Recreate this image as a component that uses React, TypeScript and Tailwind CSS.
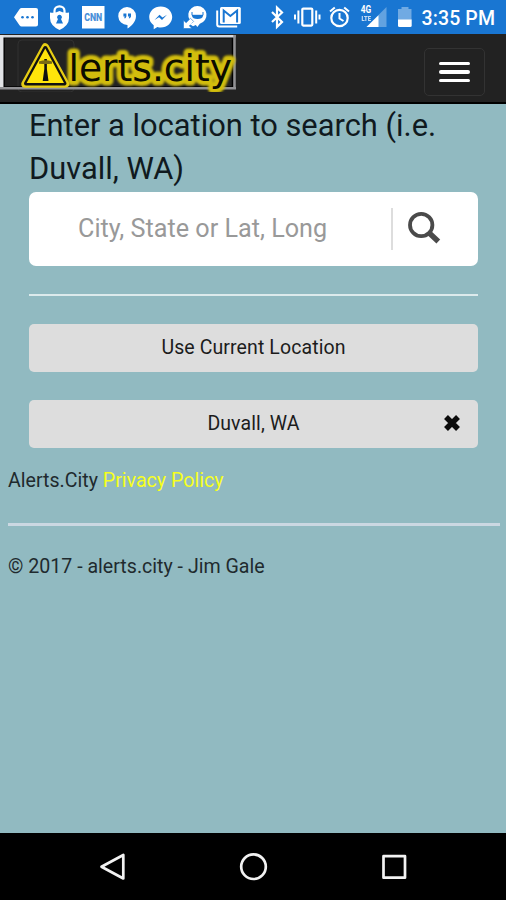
import type { ReactNode } from 'react';

function StatusBar() {
  return (
    <div className="h-[34px] bg-[#1976d2] text-white">
      <svg width="506" height="34" viewBox="0 0 506 34" fill="currentColor" fontFamily="Roboto, sans-serif">
        {/* message tag */}
        <path d="M21.5 8H36a2 2 0 0 1 2 2v14.500a2 2 0 0 1-2 2H21.500q-1 0-2-1.200L14 17.200l5.500-8q1-1.200 2-1.200Z" />
        <g fill="#1976d2">
          <circle cx="22.500" cy="17.200" r="1.300" />
          <circle cx="27.500" cy="17.200" r="1.300" />
          <circle cx="32.500" cy="17.200" r="1.300" />
        </g>
        {/* vpn shield */}
        <path d="M54.500 14V10.800a5 4.500 0 0 1 10 0V14" fill="none" stroke="currentColor" strokeWidth="2.200" />
        <path d="M50 12.500q5.500 1 9.500-1.500q4 2.500 9.500 1.500v5.500q0 7.500-9.500 12q-9.500-4.500-9.500-12Z" />
        <path d="M59.500 14.800a2.400 2.400 0 0 1 1.500 4.300l2 4.400h-7l2-4.400a2.400 2.400 0 0 1 1.500-4.300Z" fill="#1976d2" />
        {/* cnn */}
        <rect x="82" y="6" width="22.500" height="22.500" />
        <text x="84.200" y="20.800" fontSize="10" fontWeight="900" fill="#4a90d9" textLength="18" lengthAdjust="spacingAndGlyphs">CNN</text>
        {/* hangouts */}
        <path d="M127 7a9 9 0 0 1 9 9c0 6-5 10.500-8.500 12.500V25a9 9 0 1 1-.5-18Z" />
        <path d="M123.400 13.500h3v3l-1 1.700h-1.300l.7-1.700h-1.400ZM128 13.500h3v3l-1 1.700h-1.300l.7-1.700h-1.400Z" fill="#1976d2" />
        {/* messenger */}
        <path d="M160.700 6.500c6.500 0 11.500 4.700 11.500 10.500s-5 10.500-11.500 10.500q-1.700 0-3.300-.5l-3.700 2.300v-4c-2.700-2-4.500-5-4.500-8.300 0-5.800 5-10.500 11.500-10.500Z" />
        <path d="m154.500 20 5-5.200 3 2.600 4.500-2.600-5 5.200-3-2.700Z" fill="#1976d2" />
        {/* call bubble */}
        <path d="M197.500 6a9 9 0 0 1 2.300 17.700l-2.500 3.200-2.300-3.200A9 9 0 0 1 197.500 6Z" />
        <path d="M192 12v3.300h11V12" fill="none" stroke="#1976d2" strokeWidth="1" />
        <path d="M192 15h11v.8q-.5 3.200-5.500 3.200t-5.500-3.200Z" fill="#1976d2" />
        <path d="M183.500 28.500v-8.300l2.600 2.500 4.400-4.400 3.200 3.200-4.400 4.400 2.700 2.600Z" stroke="#1976d2" strokeWidth=".6" />
        <path d="m195 21.300 2.500 3-4.500 2-3-2Z" />
        {/* gmail stack */}
        <path d="M217.200 10.500v14a2 2 0 0 0 2 2h18" fill="none" stroke="currentColor" strokeWidth="2" />
        <rect x="220" y="7" width="20.800" height="17" rx="1.500" />
        <path d="M223.700 22.500v-12l6.700 5.500 6.700-5.500v12" fill="none" stroke="#1976d2" strokeWidth="2" />
        {/* bluetooth */}
        <path d="m272 12 10 10-5 4.800V7.700l5 4.800-10 9.500" fill="none" stroke="currentColor" strokeWidth="2.200" />
        {/* vibrate */}
        <rect x="302.300" y="8.600" width="10" height="17" rx="1" fill="none" stroke="currentColor" strokeWidth="2.200" />
        <path d="M298.400 10.500v13M316.200 10.500v13M295 14.500v5M319.500 14.500v5" stroke="currentColor" strokeWidth="2" />
        {/* alarm */}
        <circle cx="339.500" cy="18" r="8.200" fill="none" stroke="currentColor" strokeWidth="2.200" />
        <path d="M339.500 13v5.500l4 2.500M330 11.500l4.800-4M349 11.500l-4.800-4" fill="none" stroke="currentColor" strokeWidth="2" />
        {/* signal */}
        <path d="M386.500 7v20H366.500Z" opacity=".32" />
        <path d="M378.500 15.200V27h-12Z" />
        <text x="360.800" y="13" fontSize="10" fontWeight="700" textLength="10.500" lengthAdjust="spacingAndGlyphs">4G</text>
        <text x="361.500" y="21" fontSize="8" fontWeight="900" opacity=".75" textLength="9.500" lengthAdjust="spacingAndGlyphs">LTE</text>
        {/* battery */}
        <path d="M401.500 7h7v2h3v11h-13.500V9h3.500Z" opacity=".38" />
        <path d="M398 19.500h13.700V25.500q0 1.500-1.500 1.500h-10.700q-1.500 0-1.500-1.500Z" />
        <text x="421.500" y="25.200" fontSize="19.500" fontWeight="500" textLength="73.500">3:35 PM</text>
      </svg>
    </div>
  );
}

function Logo() {
  return (
    <svg width="240" height="58" viewBox="0 34 240 58">
      <defs>
        <filter id="glow" x="-10%" y="-30%" width="120%" height="160%">
          <feGaussianBlur stdDeviation="1.3" />
        </filter>
      </defs>
      <rect x="18" y="40" width="56" height="52" rx="4" fill="none" stroke="#303030" />
      <rect x="4" y="37.500" width="228.500" height="49.500" fill="none" stroke="#000" strokeWidth="1.500" />
      <path d="M0 36.200H235.500" stroke="#d4d7dc" strokeWidth="2.500" />
      <path d="M1.700 35V89" stroke="#e2e3e6" strokeWidth="3.500" />
      <path d="M234.500 35V89.500M0 88.200H236" stroke="#929295" strokeWidth="2.500" />
      <g fontFamily="'DejaVu Sans', sans-serif" fontSize="37.500">
        <text x="68.500" y="80.500" textLength="163.500" lengthAdjust="spacingAndGlyphs" fill="#d2bd08" stroke="#d2bd08" strokeWidth="9" strokeLinejoin="round" filter="url(#glow)">lerts.city</text>
        <text x="68.500" y="80.500" textLength="163.500" lengthAdjust="spacingAndGlyphs" fill="#0c0c00">lerts.city</text>
      </g>
      <path d="M45.300 47 65.500 84H25Z" fill="#e6cd14" stroke="#e6cd14" strokeWidth="7.500" strokeLinejoin="round" />
      <path d="M45.300 48 64.500 83.500H26Z" fill="#ffe50a" stroke="#111" strokeWidth="4" strokeLinejoin="round" />
      <path d="M45.300 48.500 64 83H26.600Z" fill="#ffe50a" />
      <path d="M44.300 59h2.600v10l1.600 12h-5.800l1.600-12Z" fill="#111" />
      <path d="M39 61.500q6.500-2.500 13 0v2.200q-6.500.5-13 0Z" fill="#7c6c12" />
    </svg>
  );
}

function NavBar() {
  return (
    <header className="flex h-[70px] items-start justify-between border-b-2 border-black bg-[#222] pr-[21px]">
      <Logo />
      <button className="mt-3.5 flex h-[48px] w-[61px] flex-col items-center justify-center gap-[5px] rounded-[5px] border border-[#333]">
        <span className="h-[3.5px] w-[31px] rounded-full bg-white" />
        <span className="h-[3.5px] w-[31px] rounded-full bg-white" />
        <span className="h-[3.5px] w-[31px] rounded-full bg-white" />
      </button>
    </header>
  );
}

function LocationButton({ children }: { children: ReactNode }) {
  return (
    <button className="relative flex h-[48px] w-full items-center justify-center rounded-[5px] bg-[#ddd] pb-px text-[19.5px] tracking-[0.1px] text-[#1c1c1c]">
      {children}
    </button>
  );
}

export default function App() {
  return (
    <div className="flex h-[900px] w-[506px] flex-col overflow-hidden bg-[#91bac1] font-['Roboto',sans-serif] text-[#1f2a2e]">
      <StatusBar />
      <NavBar />
      <main className="pr-[28px] pl-[29px]">
        <h1 className="-mr-4 h-[88px] text-[30.85px] leading-[43px] font-normal text-[#101a1f]">
          Enter a location to search (i.e.
          <br />
          Duvall, WA)
        </h1>
        <div className="flex h-[74px] items-center rounded-[7px] bg-white pl-[49px]">
          <span className="w-[313px] text-[25.2px] text-[#999]">City, State or Lat, Long</span>
          <span className="h-[42px] w-[2px] bg-[#ddd]" />
          <svg className="ml-3.5" width="36" height="36" viewBox="0 0 36 36" fill="none" stroke="#4a4a4a">
            <circle cx="14.200" cy="14" r="11.200" strokeWidth="3.800" />
            <path d="m22 21.800 9.300 8.800" strokeWidth="5.500" />
          </svg>
        </div>
        <hr className="mt-7 mb-7 border-t-2 border-[#dceaec]" />
        <LocationButton>Use Current Location</LocationButton>
        <div className="h-7" />
        <LocationButton>
          Duvall, WA
          <svg className="absolute top-3.5 right-[17px]" width="18" height="18" viewBox="0 0 18 18" stroke="#0b0b0b" strokeWidth="5.500">
            <path d="m3 3 12 12M15 3 3 15" />
          </svg>
        </LocationButton>
      </main>
      <footer className="flex-1 px-2 text-[19.6px]">
        <p className="mt-[19px] leading-7">
          Alerts.City <a className="text-[#f6ff1e]">Privacy Policy</a>
        </p>
        <hr className="mt-[28px] -mr-0.5 border-t-[3px] border-[#cbd8e2]" />
        <p className="mt-[27px] leading-7">© 2017 - alerts.city - Jim Gale</p>
      </footer>
      <nav className="h-[67px] bg-black">
        <svg width="506" height="67" viewBox="0 833 506 67" fill="none" stroke="#f2f2f2" strokeWidth="2.700" strokeLinejoin="round">
          <path d="M123.300 855v23.500L101.500 866.700Z" />
          <circle cx="253.500" cy="866.700" r="12.300" />
          <rect x="383.500" y="856.200" width="21.500" height="21.500" />
        </svg>
      </nav>
    </div>
  );
}
